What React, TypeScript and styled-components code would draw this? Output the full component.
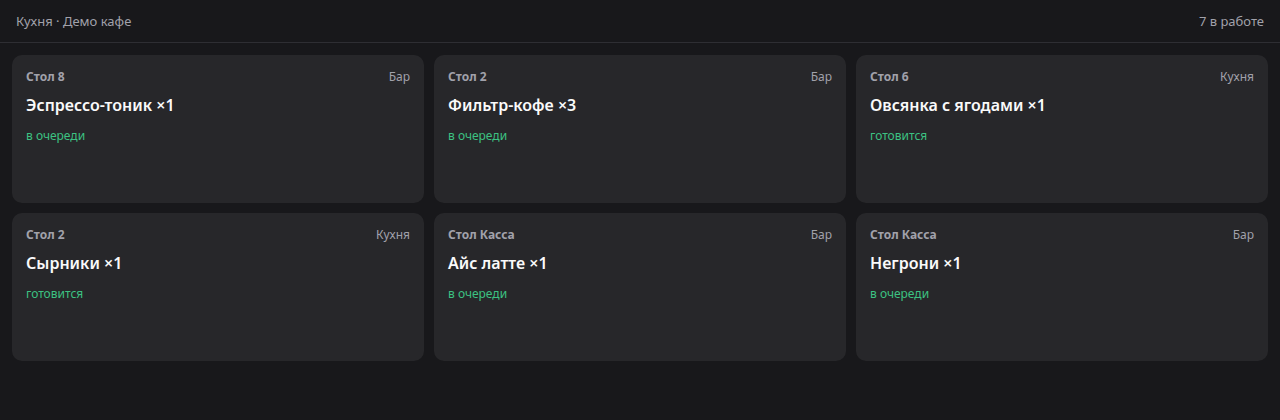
import React from "react";
import styled, { createGlobalStyle } from "styled-components";

const Global = createGlobalStyle`
  html, body { margin: 0; padding: 0; background: #18181b; }
  body { font-family: "Noto Sans", "Open Sans", sans-serif; color: #fafafa; }
  * { box-sizing: border-box; }
`;

const Page = styled.div`
  min-height: 420px;
  background: #18181b;
`;

const TopBar = styled.header`
  height: 43px;
  display: flex;
  align-items: center;
  justify-content: space-between;
  padding: 0 16px;
  border-bottom: 1px solid #2e2e33;
  font-size: 13px;
  color: #a1a1aa;
`;

const Grid = styled.main`
  display: grid;
  grid-template-columns: repeat(3, 1fr);
  gap: 10px;
  padding: 12px;
`;

const Card = styled.div`
  background: #27272a;
  border-radius: 10px;
  min-height: 148px;
  padding: 14px 14px;
  display: flex;
  flex-direction: column;
`;

const CardHead = styled.div`
  display: flex;
  justify-content: space-between;
  align-items: center;
  font-size: 12px;
  line-height: 16px;
`;

const Table = styled.span`
  font-weight: 700;
  color: #a1a1aa;
`;

const Station = styled.span`
  color: #a1a1aa;
`;

const Title = styled.div`
  margin-top: 9px;
  font-size: 16px;
  line-height: 22px;
  font-weight: 600;
  color: #fafafa;
`;

const Status = styled.div`
  margin-top: 12px;
  font-size: 12px;
  line-height: 16px;
  color: #3cc282;
`;

const orders = [
  { table: "Стол 8", station: "Бар", title: "Эспрессо-тоник ×1", status: "в очереди" },
  { table: "Стол 2", station: "Бар", title: "Фильтр-кофе ×3", status: "в очереди" },
  { table: "Стол 6", station: "Кухня", title: "Овсянка с ягодами ×1", status: "готовится" },
  { table: "Стол 2", station: "Кухня", title: "Сырники ×1", status: "готовится" },
  { table: "Стол Касса", station: "Бар", title: "Айс латте ×1", status: "в очереди" },
  { table: "Стол Касса", station: "Бар", title: "Негрони ×1", status: "в очереди" },
];

export default function App() {
  return (
    <Page>
      <Global />
      <TopBar>
        <span>Кухня · Демо кафе</span>
        <span>7 в работе</span>
      </TopBar>
      <Grid>
        {orders.map((o, i) => (
          <Card key={i}>
            <CardHead>
              <Table>{o.table}</Table>
              <Station>{o.station}</Station>
            </CardHead>
            <Title>{o.title}</Title>
            <Status>{o.status}</Status>
          </Card>
        ))}
      </Grid>
    </Page>
  );
}
